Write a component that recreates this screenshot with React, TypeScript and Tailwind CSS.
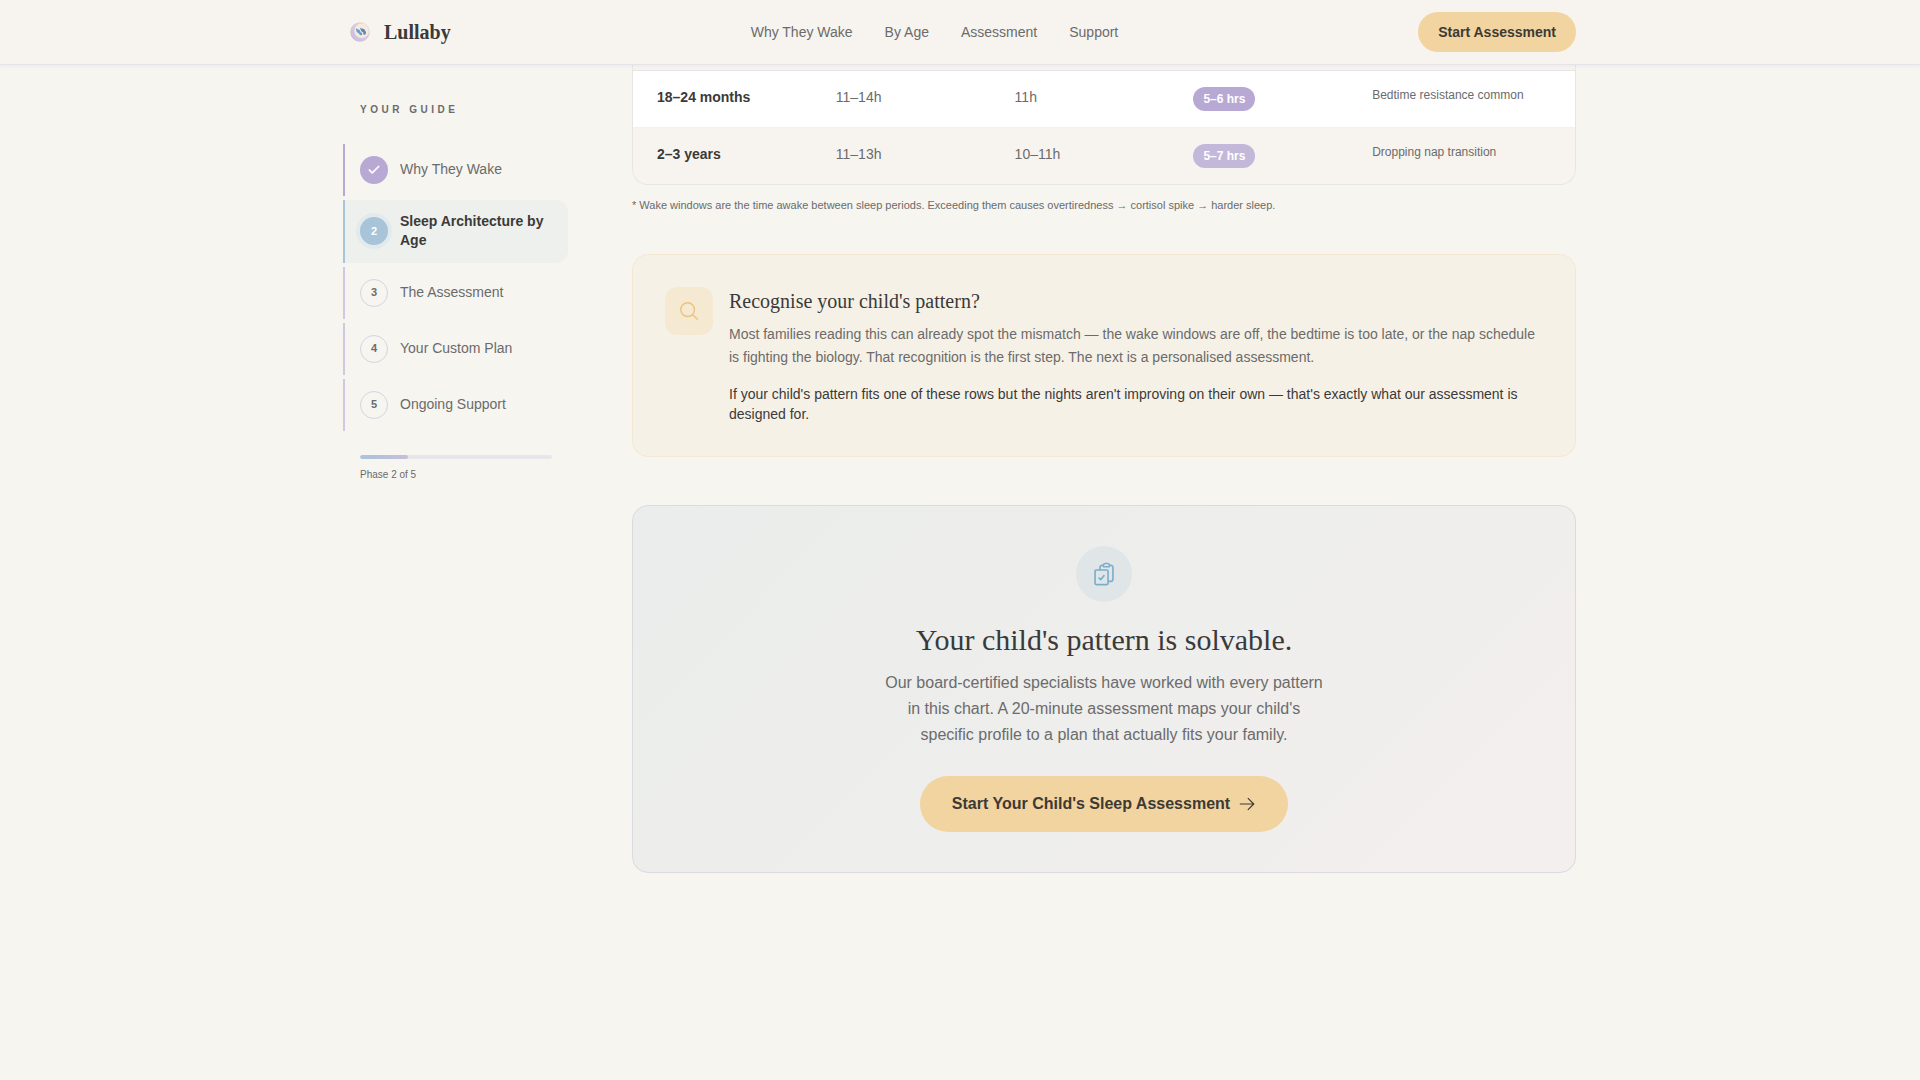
import { HiOutlineArrowRight, HiOutlineClipboardDocumentCheck, HiOutlineMagnifyingGlass } from 'react-icons/hi2'
import { Check } from 'lucide-react'
import clsx from 'clsx'

type StepState = 'done' | 'active' | 'todo'

interface Step {
  label: string
  state: StepState
}

interface SleepRow {
  age: string
  total: string
  night: string
  window: string
  note: string
  rowClass: string
  badgeClass: string
}

const NAV_LINKS = ['Why They Wake', 'By Age', 'Assessment', 'Support']

const STEPS: Step[] = [
  { label: 'Why They Wake', state: 'done' },
  { label: 'Sleep Architecture by Age', state: 'active' },
  { label: 'The Assessment', state: 'todo' },
  { label: 'Your Custom Plan', state: 'todo' },
  { label: 'Ongoing Support', state: 'todo' }
]

const ROWS: SleepRow[] = [
  {
    age: '18–24 months',
    total: '11–14h',
    night: '11h',
    window: '5–6 hrs',
    note: 'Bedtime resistance common',
    rowClass: 'bg-white border-[#e6e4e6]',
    badgeClass: 'bg-[#b8a9d4]'
  },
  {
    age: '2–3 years',
    total: '11–13h',
    night: '10–11h',
    window: '5–7 hrs',
    note: 'Dropping nap transition',
    rowClass: 'bg-[#f7f4ef] border-[#f3f1f0]',
    badgeClass: 'bg-[#c3b8da]'
  }
]

function Logo() {
  return (
    <svg viewBox="0 0 32 32" className="w-8 h-8" aria-hidden="true">
      <defs>
        <linearGradient id="moon" x1="1" y1="0" x2="0" y2="1">
          <stop offset="0" stopColor="#f3dcc4" />
          <stop offset="0.45" stopColor="#dccbdc" />
          <stop offset="1" stopColor="#c3b9e2" />
        </linearGradient>
      </defs>
      <circle cx="16" cy="16" r="9.8" fill="url(#moon)" />
      <circle cx="17.6" cy="14.8" r="7.2" fill="#f6eadf" />
      {/* pair of little feet */}
      <g fill="#5f9fca">
        <ellipse cx="14.4" cy="15.2" rx="2.2" ry="1.7" transform="rotate(40 14.4 15.2)" />
        <ellipse cx="16.6" cy="17.6" rx="1.9" ry="1.4" transform="rotate(40 16.6 17.6)" />
        <circle cx="12.6" cy="13.4" r="0.8" />
      </g>
      <g fill="#6486b4">
        <ellipse cx="19" cy="14.4" rx="2.3" ry="1.7" transform="rotate(30 19 14.4)" />
        <ellipse cx="20.6" cy="16.8" rx="1.4" ry="1.9" transform="rotate(15 20.6 16.8)" />
        <circle cx="16.8" cy="12.8" r="0.8" />
      </g>
    </svg>
  )
}

function Header() {
  return (
    <header className="sticky top-0 z-10 bg-[#f7f4ef] border-b border-[#e6e4e8] shadow-[0_1px_4px_rgba(184,169,212,0.16)]">
      <div className="max-w-7xl mx-auto px-6 h-16 flex items-center justify-between">
        <a href="#" className="flex items-center gap-2">
          <Logo />
          <span className="font-['Liberation_Serif',serif] text-xl font-bold">Lullaby</span>
        </a>
        <nav className="flex items-center gap-8 text-sm text-[#6b6b6b]">
          {NAV_LINKS.map((link) => (
            <a key={link} href="#">{link}</a>
          ))}
        </nav>
        <button type="button" className="h-10 px-5 rounded-full bg-[#f2d4a0] text-sm font-bold text-[#3d3a35]">
          Start Assessment
        </button>
      </div>
    </header>
  )
}

function StepItem({ step, index }: { step: Step; index: number }) {
  return (
    <li>
      <a
        href="#"
        className={clsx(
          '-ml-px flex items-center gap-3 border-l-2 py-3 pl-[15px] pr-4 text-sm leading-snug',
          step.state === 'done' && 'border-[#b8a9d4] text-[#6b6b6b]',
          step.state === 'active' && 'border-[#a8c4d8] bg-[#eef0ed] rounded-r-xl font-bold',
          step.state === 'todo' && 'border-[#d0c8de] text-[#6b6b6b]'
        )}
      >
        <span
          className={clsx(
            'flex size-7 shrink-0 items-center justify-center rounded-full text-[11px] font-bold',
            step.state === 'done' && 'bg-[#b8a9d4] text-white',
            step.state === 'active' && 'bg-[#a8c4d8] text-white ring-4 ring-[#e2eaed]',
            step.state === 'todo' && 'border border-[#d8d2e0]'
          )}
        >
          {step.state === 'done' ? <Check className="size-3.5" strokeWidth={3} /> : index + 1}
        </span>
        <span>{step.label}</span>
      </a>
    </li>
  )
}

function Sidebar() {
  return (
    <aside className="w-56 shrink-0 pt-9">
      <p className="pl-4 text-[10px] leading-[18px] font-bold tracking-[0.35em] text-[#6b6b6b]">YOUR GUIDE</p>
      <ol className="mt-[25px] flex flex-col gap-1">
        {STEPS.map((step, i) => (
          <StepItem key={step.label} step={step} index={i} />
        ))}
      </ol>
      <div className="mt-6 px-4">
        <div className="h-1 rounded-full bg-[#e8e6ea] overflow-hidden">
          <div className="h-full w-1/4 rounded-full bg-linear-to-r from-[#a8c4d8] to-[#c8bedc]" />
        </div>
        <p className="mt-2 text-[10px] leading-4 text-[#6b6b6b]">Phase 2 of 5</p>
      </div>
    </aside>
  )
}

function SleepTable() {
  return (
    <section>
      <div className="pt-[5px] border border-t-0 border-[#e8e5e4] rounded-b-2xl bg-[#f7f4ef] overflow-hidden">
        <table className="block">
          <tbody className="block">
            {ROWS.map((row) => (
              <tr
                key={row.age}
                className={clsx('grid grid-cols-5 items-start px-6 py-4 border-t text-sm text-[#6b6b6b]', row.rowClass)}
              >
                <th scope="row" className="text-left font-bold text-[#3a3a3a]">{row.age}</th>
                <td>{row.total}</td>
                <td>{row.night}</td>
                <td className="flex">
                  <span className={clsx('px-2.5 py-1 rounded-full text-xs font-bold text-white', row.badgeClass)}>
                    {row.window}
                  </span>
                </td>
                <td className="text-xs">{row.note}</td>
              </tr>
            ))}
          </tbody>
        </table>
      </div>
      <p className="mt-3 text-[11px] leading-[17px] text-[#6b6b6b]">
        * Wake windows are the time awake between sleep periods. Exceeding them causes overtiredness → cortisol spike → harder sleep.
      </p>
    </section>
  )
}

function PatternCard() {
  return (
    <section className="mt-10 flex gap-4 p-8 rounded-2xl border border-[#f4e8d4] bg-[#f6f1e6]">
      <div className="flex size-12 shrink-0 items-center justify-center rounded-xl bg-[#f5e9d2]">
        <HiOutlineMagnifyingGlass className="size-[22px] text-[#edc27c]" />
      </div>
      <div>
        <h3 className="font-['Liberation_Serif',serif] text-xl">Recognise your child's pattern?</h3>
        <p className="mt-2 text-sm leading-[23px] text-[#6b6b6b]">
          Most families reading this can already spot the mismatch — the wake windows are off, the bedtime is too late, or
          the nap schedule is fighting the biology. That recognition is the first step. The next is a personalised
          assessment.
        </p>
        <p className="mt-[15px] text-sm">
          If your child's pattern fits one of these rows but the nights aren't improving on their own — that's exactly what
          our assessment is designed for.
        </p>
      </div>
    </section>
  )
}

function CallToAction() {
  return (
    <section className="mt-12 flex flex-col items-center p-10 rounded-2xl border border-[#dadae0] bg-linear-135 from-[#eaedeb] via-[#eeeeec] to-[#f3efee] text-center">
      <div className="flex size-14 items-center justify-center rounded-full bg-[#e0e6e8]">
        <HiOutlineClipboardDocumentCheck className="size-[26px] text-[#7baec8]" />
      </div>
      <h2 className="mt-5 font-['Liberation_Serif',serif] text-3xl">Your child's pattern is solvable.</h2>
      <p className="mt-3 max-w-md leading-[26px] text-[#6b6b6b]">
        Our board-certified specialists have worked with every pattern in this chart. A 20-minute assessment maps your
        child's specific profile to a plan that actually fits your family.
      </p>
      <button
        type="button"
        className="mt-7 h-14 px-8 flex items-center gap-2 rounded-full bg-[#f2d4a0] font-bold text-[#3d3a35]"
      >
        Start Your Child's Sleep Assessment
        <HiOutlineArrowRight className="size-[18px]" />
      </button>
    </section>
  )
}

export default function App() {
  return (
    <div className="min-h-screen bg-[#f6f5f0] font-['Liberation_Sans',Arial,sans-serif] text-[#3a3a3a]">
      <Header />
      <div className="max-w-7xl mx-auto px-6 flex items-start gap-16">
        <Sidebar />
        <main className="flex-1 min-w-0 pb-24">
          <SleepTable />
          <PatternCard />
          <CallToAction />
        </main>
      </div>
    </div>
  )
}
